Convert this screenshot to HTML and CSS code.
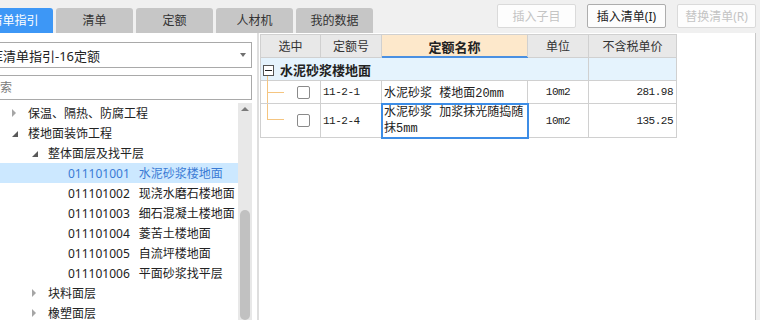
FILE: index.html
```html
<!DOCTYPE html>
<html lang="zh-CN">
  <head>
    <meta charset="UTF-8" />
    <title>清单指引</title>
    <link rel="stylesheet" href="styles.css">
  </head>
  <body>
    <div class="topbar">
      <div class="tabs">
        <div class="tab active">清单指引</div>
        <div class="tab">清单</div>
        <div class="tab">定额</div>
        <div class="tab">人材机</div>
        <div class="tab">我的数据</div>
      </div>
      <div class="actions">
        <button class="btn" disabled>插入子目</button>
        <button class="btn">插入清单(I)</button>
        <button class="btn" disabled>替换清单(R)</button>
      </div>
    </div>

    <div class="main">
      <div class="side">
        <div class="select">库清单指引-16定额<span class="caret"></span></div>
        <div class="search">搜索</div>
        <div class="tree-wrap">
          <div class="tree">
            <div class="row l1"><span class="arrow closed"></span>保温、隔热、防腐工程</div>
            <div class="row l1"><span class="arrow open"></span>楼地面装饰工程</div>
            <div class="row l2"><span class="arrow open"></span>整体面层及找平层</div>
            <div class="row leaf selected"><span class="code">011101001</span>水泥砂浆楼地面</div>
            <div class="row leaf"><span class="code">011101002</span>现浇水磨石楼地面</div>
            <div class="row leaf"><span class="code">011101003</span>细石混凝土楼地面</div>
            <div class="row leaf"><span class="code">011101004</span>菱苦土楼地面</div>
            <div class="row leaf"><span class="code">011101005</span>自流坪楼地面</div>
            <div class="row leaf"><span class="code">011101006</span>平面砂浆找平层</div>
            <div class="row l2"><span class="arrow closed"></span>块料面层</div>
            <div class="row l2"><span class="arrow closed"></span>橡塑面层</div>
          </div>
          <div class="scrollbar">
            <span class="up"></span>
            <span class="thumb"></span>
          </div>
        </div>
      </div>

      <div class="content">
        <table class="grid">
          <colgroup>
            <col class="c-sel">
            <col class="c-code">
            <col class="c-name">
            <col class="c-unit">
            <col class="c-price">
          </colgroup>
          <thead>
            <tr>
              <th>选中</th>
              <th>定额号</th>
              <th class="hl">定额名称</th>
              <th>单位</th>
              <th>不含税单价</th>
            </tr>
          </thead>
          <tbody>
            <tr class="group">
              <td colspan="4" class="group-title"><span class="fold"></span>水泥砂浆楼地面</td>
              <td></td>
            </tr>
            <tr>
              <td class="sel first"><span class="check"></span></td>
              <td class="mono">11-2-1</td>
              <td class="name">水泥砂浆 楼地面20mm</td>
              <td class="mono center">10m2</td>
              <td class="mono right">281.98</td>
            </tr>
            <tr class="tall">
              <td class="sel last"><span class="check"></span></td>
              <td class="mono">11-2-4</td>
              <td class="name editing">水泥砂浆 加浆抹光随捣随<br>抹5mm</td>
              <td class="mono center">10m2</td>
              <td class="mono right">135.25</td>
            </tr>
          </tbody>
        </table>
      </div>
    </div>
  </body>
</html>
```

FILE: styles.css
```css
* {
  margin: 0;
  padding: 0;
  box-sizing: border-box;
}
body {
  width: 760px;
  height: 320px;
  overflow: hidden;
  background-color: #f0f0f0;
  font-family: "Noto Sans", "Noto Sans CJK SC", sans-serif;
  font-size: 12px;
  color: #222;
}

/* top bar */
.topbar {
  display: flex;
  height: 33px;
}
.tabs {
  display: flex;
  gap: 3px;
  margin-left: -24px;
  align-self: flex-end;
}
.tab {
  width: 77px;
  height: 25px;
  line-height: 25px;
  text-align: center;
  background-color: #c6c6c6;
  border-radius: 3px 3px 0 0;
  color: #333;
}
.tab.active {
  background-color: #3d97f6;
  color: #fff;
}
.actions {
  display: flex;
  gap: 11px;
  margin-left: auto;
  margin-right: 4px;
  padding-top: 4px;
  align-self: flex-start;
}
.btn {
  width: 79px;
  height: 24px;
  border: 1px solid #adadad;
  border-radius: 2px;
  background-color: #fdfdfd;
  font-family: "Noto Sans", "Noto Sans CJK SC", sans-serif;
  font-size: 12px;
  color: #222;
}
.btn:disabled {
  border-color: #dadada;
  color: #c4c4c4;
}

/* layout */
.main {
  display: flex;
  height: 287px;
}
.side {
  width: 257px;
  background-color: #fff;
  display: flex;
  flex-direction: column;
  overflow: hidden;
}
.select {
  display: flex;
  justify-content: space-between;
  align-items: center;
  height: 26px;
  margin: 9px 5px 0 -24px;
  padding: 0 5px 0 13px;
  border: 1px solid #a9a9a9;
  font-size: 13px;
}
.caret {
  width: 0;
  height: 0;
  border-top: 4px solid #707070;
  border-left: 3px solid transparent;
  border-right: 3px solid transparent;
}
.search {
  height: 25px;
  line-height: 23px;
  margin: 7px 5px 0 -24px;
  padding-left: 11px;
  border: 1px solid #a9a9a9;
  color: #7a7a7a;
}

/* tree */
.tree-wrap {
  flex: 1;
  display: flex;
  margin: 3px 5px 0 0;
  overflow: hidden;
}
.tree {
  flex: 1;
}
.row {
  display: flex;
  align-items: center;
  height: 20px;
  white-space: nowrap;
}
.row.l1 {
  padding-left: 8px;
}
.row.l2 {
  padding-left: 28px;
}
.row.leaf {
  padding-left: 68px;
}
.row.selected {
  background-color: #cce8ff;
  color: #3a7bd5;
}
.code {
  margin-right: 9px;
}
.arrow {
  width: 20px;
  height: 20px;
  flex: none;
  display: flex;
  align-items: center;
}
.arrow::before {
  content: "";
  width: 0;
  height: 0;
  margin-left: 4px;
}
.arrow.closed::before {
  border-left: 4px solid #a6a6a6;
  border-top: 4px solid transparent;
  border-bottom: 4px solid transparent;
}
.arrow.open::before {
  border-bottom: 6px solid #595959;
  border-left: 6px solid transparent;
  margin-top: 2px;
}
.scrollbar {
  width: 14px;
  display: flex;
  flex-direction: column;
  align-items: center;
  background-color: #e8e8e8;
}
.up {
  width: 0;
  height: 0;
  margin-top: 4px;
  border-bottom: 4px solid #7a7a7a;
  border-left: 4px solid transparent;
  border-right: 4px solid transparent;
}
.thumb {
  width: 10px;
  height: 200px;
  margin-top: 99px;
  border-radius: 5px;
  background-color: #c1c1c1;
}

/* grid */
.content {
  flex: 1;
  margin-right: 4px;
  padding: 1px 0 0 1px;
  background-color: #fff;
  border-left: 2px solid #dedede;
  border-right: 1px solid #c8c8c8;
}
.grid {
  border-collapse: collapse;
  table-layout: fixed;
  width: 416px;
}
.c-sel { width: 60px; }
.c-code { width: 61px; }
.c-name { width: 146px; }
.c-unit { width: 61px; }
.c-price { width: 88px; }
.grid th,
.grid td {
  height: 23px;
  padding: 0 2px;
  border: 1px solid #d0d0d0;
  white-space: nowrap;
}
.grid th {
  background-color: #e8e8e8;
  font-weight: normal;
  color: #333;
}
.grid th.hl {
  background-color: #fde8cb;
  font-weight: bold;
  font-size: 13px;
  color: #222;
  border-bottom-color: #4a90e2;
  box-shadow: inset 0 -1px 0 #4a90e2;
}
.grid td {
  font-family: "Liberation Mono", "Noto Sans CJK SC", monospace;
}
.group td {
  background-color: #e5f3fd;
}
.group-title {
  position: relative;
  font-family: "Noto Sans", "Noto Sans CJK SC", sans-serif;
  font-weight: bold;
  font-size: 13px;
}
.group-title::after {
  content: "";
  position: absolute;
  left: 6px;
  top: 18px;
  bottom: -1px;
  width: 1px;
  background-color: #f5c580;
}
.fold {
  display: inline-block;
  position: relative;
  width: 11px;
  height: 11px;
  margin-right: 6px;
  vertical-align: -1px;
  border: 1px solid #555;
  background-color: #fff;
}
.fold::before {
  content: "";
  position: absolute;
  left: 1px;
  top: 4px;
  width: 7px;
  height: 1px;
  background-color: #222;
}
.grid td.mono {
  font-size: 11px;
  letter-spacing: -0.5px;
}
.center {
  text-align: center;
}
.grid td.right {
  text-align: right;
  padding-right: 3px;
}
.name {
  font-size: 12px;
}
.tall td {
  height: 34px;
}
.name.editing {
  line-height: 16px;
  outline: 2px solid #3d8de6;
  outline-offset: -1px;
}
.sel {
  position: relative;
}
.sel::before,
.sel::after {
  content: "";
  position: absolute;
  left: 6px;
  background-color: #f5c580;
}
.sel::before {
  top: 0;
  width: 1px;
}
.sel::after {
  height: 1px;
  width: 17px;
}
.sel.first::before {
  bottom: 0;
}
.sel.first::after {
  top: 11px;
}
.sel.last::before {
  height: 16px;
}
.sel.last::after {
  top: 15px;
}
.check {
  display: block;
  width: 13px;
  height: 13px;
  margin-left: 34px;
  border: 1px solid #8a8a8a;
  border-radius: 2px;
  background-color: #fff;
}
```
